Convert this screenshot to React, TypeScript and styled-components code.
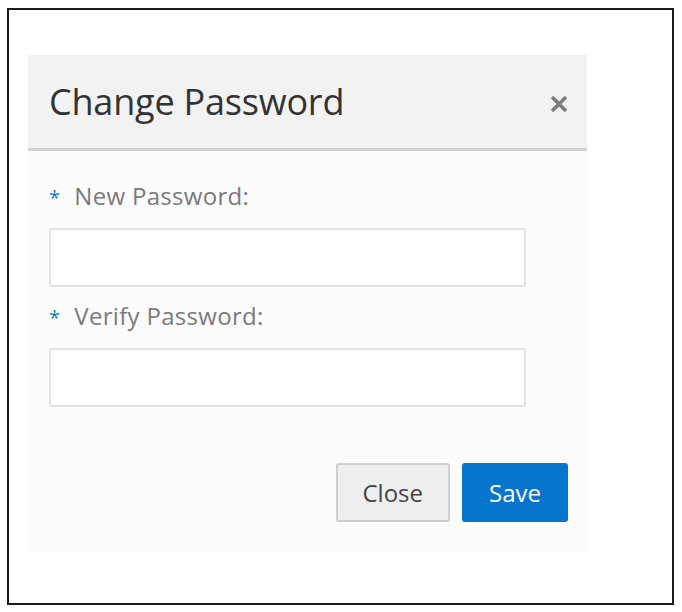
import styled, { createGlobalStyle } from "styled-components";

const GlobalStyle = createGlobalStyle`
  body {
    margin: 0;
    background: #ffffff;
    font-family: "Open Sans", "Liberation Sans", sans-serif;
  }
`

const Frame = styled.div`
  box-sizing: border-box;
  margin: 8px 0 0 7px;
  width: 667px;
  height: 597px;
  border: 2px solid #1a1a1a;
  padding: 45px 0 0 19px;
`

const Dialog = styled.div`
  width: 559px;
  background: #fcfcfc;
`

const Header = styled.header`
  box-sizing: border-box;
  height: 96px;
  display: flex;
  align-items: center;
  justify-content: space-between;
  padding: 0 18px 0 21px;
  background: #f2f2f2;
  border-bottom: 3px solid #d2d2d2;
`

const Title = styled.h1`
  margin: 0;
  font-size: 36px;
  font-weight: 400;
  color: #333333;
  letter-spacing: -0.2px;
`

const CloseIcon = styled.button`
  border: none;
  background: none;
  padding: 0;
  margin-top: 4px;
  display: flex;
  cursor: pointer;
`

const Body = styled.div`
  padding: 28px 61px 30px 21px;
  display: flex;
  flex-direction: column;
`

const Label = styled.label`
  display: flex;
  align-items: center;
  gap: 14px;
  font-size: 24px;
  letter-spacing: 0.3px;
  color: #7a7a7a;
  height: 32px;
  margin-bottom: 17px;
`

const Star = styled.span`
  color: #1a7cc9;
  font-size: 20px;
  margin-top: 4px;
`

const Input = styled.input<{ $last?: boolean }>`
  box-sizing: border-box;
  width: 477px;
  height: 59px;
  border: 2px solid #e4e4e4;
  border-radius: 2px;
  background: #ffffff;
  margin-bottom: ${(p) => (p.$last ? "0" : "12px")};
`

const Actions = styled.div`
  display: flex;
  justify-content: flex-end;
  gap: 12px;
  margin: 56px -42px 0 0;
`

const Button = styled.button<{ $primary?: boolean }>`
  box-sizing: border-box;
  height: 59px;
  padding: 0 25px;
  font-family: inherit;
  font-size: 24px;
  border-radius: 3px;
  cursor: pointer;
  color: ${(p) => (p.$primary ? "#ffffff" : "#444444")};
  background: ${(p) => (p.$primary ? "#0875cc" : "#eeeeee")};
  border: 2px solid ${(p) => (p.$primary ? "#0875cc" : "#cfcfcf")};
`

export default function App() {
  return (
    <>
      <GlobalStyle />
      <Frame>
        <Dialog>
          <Header>
            <Title>Change Password</Title>
            <CloseIcon aria-label="Close">
              <svg width="20" height="20" viewBox="0 0 20 20">
                <path d="M3 3 L17 17 M17 3 L3 17" stroke="#7c7c7c" strokeWidth="3.6" />
              </svg>
            </CloseIcon>
          </Header>
          <Body>
            <Label>
              <Star>*</Star>New Password:
            </Label>
            <Input type="password" />
            <Label>
              <Star>*</Star>Verify Password:
            </Label>
            <Input type="password" $last />
            <Actions>
              <Button>Close</Button>
              <Button $primary>Save</Button>
            </Actions>
          </Body>
        </Dialog>
      </Frame>
    </>
  )
}
